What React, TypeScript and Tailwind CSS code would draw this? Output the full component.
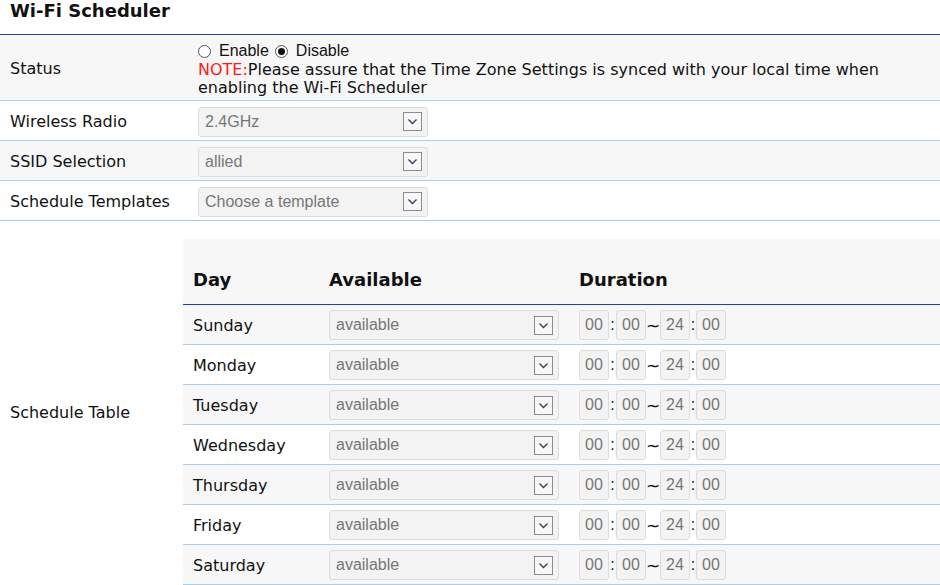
import React from "react";

const days = ["Sunday", "Monday", "Tuesday", "Wednesday", "Thursday", "Friday", "Saturday"];

function Select({ value }: { value: string }) {
  return (
    <div className="flex h-[30px] w-[230px] items-center justify-between rounded-[3px] border border-[#dcdcdc] bg-[#f3f3f3] pl-[6px] pr-[5px] font-['Liberation_Sans',Arial,sans-serif] text-[16px] text-[#777]">
      <span>{value}</span>
      <span className="flex h-[19px] w-[19px] items-center justify-center border border-[#8c8c8c] bg-[#f7f7f7]">
        <svg width="13" height="13" viewBox="0 0 13 13">
          <path d="M2.5 4.5 L6.5 8.5 L10.5 4.5" fill="none" stroke="#33415c" strokeWidth="1.4" />
        </svg>
      </span>
    </div>
  );
}

function TimeBox({ value }: { value: string }) {
  return (
    <span className="flex h-[30px] w-[30px] items-center justify-center rounded-[3px] border border-[#dcdcdc] bg-[#f3f3f3] text-[#777]">
      {value}
    </span>
  );
}

function Radio({ checked }: { checked?: boolean }) {
  return (
    <span className="flex h-[13px] w-[13px] items-center justify-center rounded-full border border-[#555] bg-white">
      {checked && <span className="h-[7px] w-[7px] rounded-full bg-[#111]" />}
    </span>
  );
}

function Row({ label, gray, children, className = "" }: { label: string; gray?: boolean; children: React.ReactNode; className?: string }) {
  return (
    <div className={`flex border-b border-[#a9cfe4] pt-[2px] ${gray ? "bg-[#f7f7f7]" : "bg-white"} ${className}`}>
      <div className="flex w-[198px] shrink-0 items-center pl-[10px]">{label}</div>
      <div className="flex min-w-0 flex-1 items-center">{children}</div>
    </div>
  );
}

export default function App() {
  return (
    <div className="h-[585px] w-[940px] overflow-hidden bg-white font-['DejaVu_Sans',Verdana,sans-serif] text-[16px] leading-[18px] text-[#111]">
      <h1 className="pl-[10px] text-[18px] font-bold leading-[21px]">Wi-Fi Scheduler</h1>
      <div className="mt-[13px] border-t border-[#2142a0]">
        <div className="flex h-[66px] border-b border-[#a9cfe4] bg-[#f7f7f7]">
          <div className="flex w-[198px] shrink-0 items-center pl-[10px] pt-[2px]">Status</div>
          <div className="flex min-w-0 flex-1 flex-col pt-[7px]">
            <div className="flex h-[18px] items-center font-['Liberation_Sans',Arial,sans-serif] text-[16px] leading-[18px]">
              <Radio />
              <span className="ml-[8px]">Enable</span>
              <span className="ml-[6px]">
                <Radio checked />
              </span>
              <span className="ml-[8px]">Disable</span>
            </div>
            <p className="mt-[1px] pr-[20px]">
              <span className="text-[#ff1a1a]">NOTE:</span>Please assure that the Time Zone Settings is synced with your local time when enabling the Wi-Fi Scheduler
            </p>
          </div>
        </div>
        <Row label="Wireless Radio" className="h-[40px]">
          <Select value="2.4GHz" />
        </Row>
        <Row label="SSID Selection" gray className="h-[40px]">
          <Select value="allied" />
        </Row>
        <Row label="Schedule Templates" className="h-[40px]">
          <Select value="Choose a template" />
        </Row>
        <div className="flex">
          <div className="flex w-[183px] shrink-0 items-center pl-[10px] pt-[20px]">Schedule Table</div>
          <div className="mt-[18px] flex-1">
            <div className="flex h-[66px] items-center border-b border-[#2142a0] bg-[#f7f7f7] pt-[17px] text-[18px] font-bold">
              <div className="w-[146px] pl-[10px]">Day</div>
              <div className="w-[250px]">Available</div>
              <div>Duration</div>
            </div>
            {days.map((d, i) => (
              <div key={d} className={`flex h-[40px] items-center border-b border-[#a9cfe4] pt-[1px] ${i % 2 === 0 ? "bg-[#f7f7f7]" : "bg-white"}`}>
                <div className="w-[146px] pl-[10px] pt-[1px]">{d}</div>
                <div className="w-[250px]">
                  <Select value="available" />
                </div>
                <div className="flex items-center font-['Liberation_Sans',Arial,sans-serif] text-[16px]">
                  <TimeBox value="00" />
                  <span className="w-[7px] text-center">:</span>
                  <TimeBox value="00" />
                  <span className="w-[14px] pt-[2px] text-center font-['DejaVu_Sans',sans-serif] text-[17px]">~</span>
                  <TimeBox value="24" />
                  <span className="w-[6px] text-center">:</span>
                  <TimeBox value="00" />
                </div>
              </div>
            ))}
          </div>
        </div>
      </div>
    </div>
  );
}
